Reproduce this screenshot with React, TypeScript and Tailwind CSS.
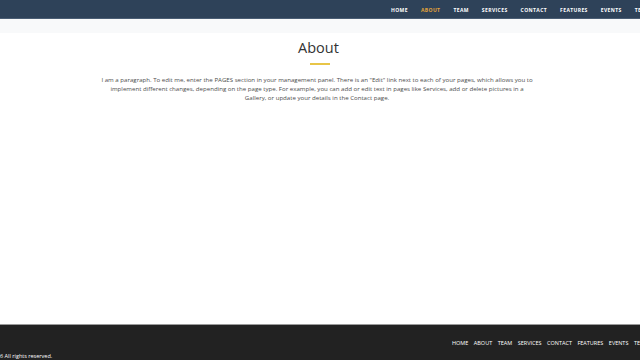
const navItems = ["Home", "About", "Team", "Services", "Contact", "Features", "Events", "Testimonials"];

export default function App() {
  return (
    <div className="h-[360px] w-[640px] overflow-hidden flex flex-col bg-white font-['Open_Sans',sans-serif]">
      <header className="h-[19px] shrink-0 bg-[#2e4259] border-b border-[#4a5d74] flex items-center pt-[3px] overflow-hidden">
        <nav className="flex items-center gap-[13px] pl-[391px] whitespace-nowrap">
          {navItems.map((item) => (
            <span
              key={item}
              className={`text-[5px] font-bold uppercase tracking-[0.4px] ${
                item === "About" ? "text-[#e3a43a]" : "text-white"
              }`}
            >
              {item}
            </span>
          ))}
        </nav>
      </header>

      <div className="h-[14px] shrink-0 bg-[#f8f9fa]"></div>

      <main className="flex-1 flex flex-col items-center">
        <h1 className="mt-[5px] -ml-[3px] text-[14.5px] leading-[20px] text-[#333] font-normal">About</h1>
        <div className="mt-[5px] w-[20px] h-[2px] bg-[#e8c547]"></div>
        <p className="mt-[10px] -ml-[6px] w-[436px] text-center text-[6.12px] leading-[9px] text-[#4d4d4d]">
          I am a paragraph. To edit me, enter the PAGES section in your management panel. There is an "Edit"
          link next to each of your pages, which allows you to implement different changes, depending on the
          page type. For example, you can add or edit text in pages like Services, add or delete pictures in a
          Gallery, or update your details in the Contact page.
        </p>
      </main>

      <footer className="h-[36px] shrink-0 bg-[#222] border-t border-[#9a9a9a] flex flex-col overflow-hidden">
        <nav className="mt-[14px] flex items-center gap-[5.5px] pl-[452px] whitespace-nowrap">
          {navItems.map((item) => (
            <span key={item} className="text-[5.5px] uppercase text-white">
              {item}
            </span>
          ))}
        </nav>
        <div className="mt-[5px] text-[5.5px] leading-[8px] text-white whitespace-nowrap">
          6 All rights reserved.
        </div>
      </footer>
    </div>
  );
}
